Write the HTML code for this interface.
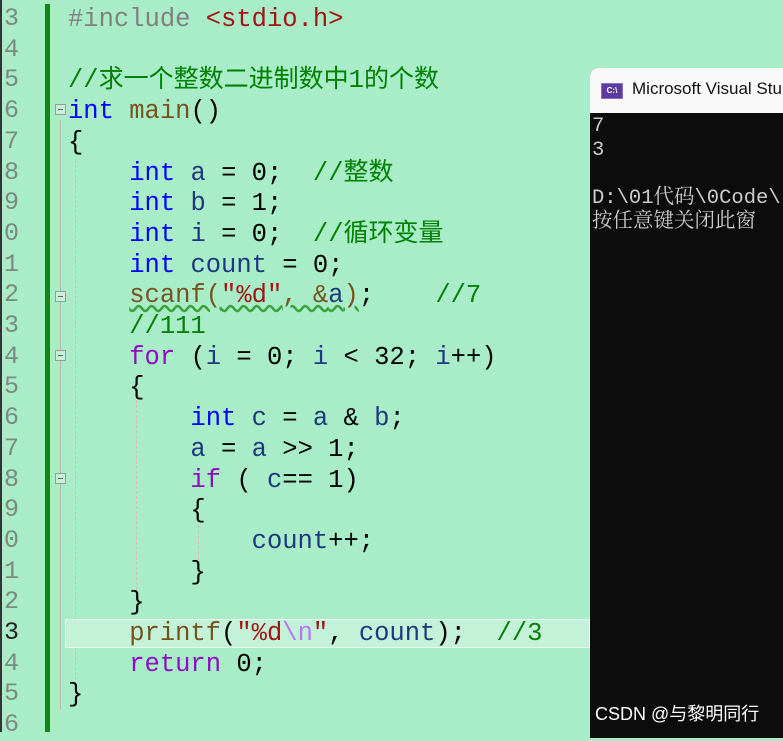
<!DOCTYPE html>
<html><head><meta charset="utf-8"><style>
body{margin:0;width:783px;height:732px;overflow:hidden;background:#a8edc8;position:relative;font-family:"Liberation Mono","Noto Sans CJK SC",monospace}
.ln{position:absolute;left:4px;font-size:25px;color:#7a8a80;line-height:30.7px}
.code{position:absolute;left:68px;font-size:25.5px;line-height:30.7px;white-space:pre;color:#000}
.k{color:#0000ff}.c{color:#008000}.p{color:#808080}.s{color:#a31515}.f{color:#74531f}.v{color:#1f377f}.r{color:#8f08c4}.e{color:#b776fb}
.cj{font-family:"Noto Sans CJK SC",sans-serif;font-size:25px;line-height:1px}
.fold{position:absolute;left:55px;width:9px;height:9px;border:1px solid #999;background:#c8f0da}
.fold:after{content:"";position:absolute;left:2px;top:4px;width:5px;height:1px;background:#666}
</style></head><body>
<div style="position:absolute;left:0;top:0;width:2px;height:732px;background:#333"></div>
<div style="position:absolute;left:45px;top:4px;width:5px;height:728px;background:#148414"></div>
<div style="position:absolute;left:60px;top:120px;width:1px;height:590px;background:#b0b8b0"></div>
<div style="position:absolute;left:75px;top:160px;width:0;height:540px;border-left:1px dashed #d9b8c0"></div>
<div style="position:absolute;left:136px;top:400px;width:0;height:190px;border-left:1px dashed #d9b8c0"></div>
<div style="position:absolute;left:198px;top:525px;width:0;height:40px;border-left:1px dashed #d9b8c0"></div>
<div class="fold" style="top:104px"></div>
<div class="fold" style="top:291px"></div>
<div class="fold" style="top:350px"></div>
<div class="fold" style="top:473px"></div>
<div style="position:absolute;left:65px;top:619px;width:525px;height:29px;background:#c3f2d8;border:1px solid #e8f8ee;box-sizing:border-box"></div>
<div class="ln" style="top:4px">3<br>4<br>5<br>6<br>7<br>8<br>9<br>0<br>1<br>2<br>3<br>4<br>5<br>6<br>7<br>8<br>9<br>0<br>1<br>2<br><span style="color:#222">3</span><br>4<br>5<br>6</div>
<div class="code" style="top:5px"><span class="p">#include</span> <span class="s">&lt;stdio.h&gt;</span>

<span class="c">//<span class="cj">求一个整数二进制数中</span>1<span class="cj">的个数</span></span>
<span class="k">int</span> <span class="f">main</span>()
{
    <span class="k">int</span> <span class="v">a</span> = 0;  <span class="c">//<span class="cj">整数</span></span>
    <span class="k">int</span> <span class="v">b</span> = 1;
    <span class="k">int</span> <span class="v">i</span> = 0;  <span class="c">//<span class="cj">循环变量</span></span>
    <span class="k">int</span> <span class="v">count</span> = 0;
    <span class="f" style="text-decoration:underline wavy #3ca03c">scanf(<span class="s">"%d"</span>, &amp;<span class="v">a</span>)</span>;    <span class="c">//7</span>
    <span class="c">//111</span>
    <span class="r">for</span> (<span class="v">i</span> = 0; <span class="v">i</span> &lt; 32; <span class="v">i</span>++)
    {
        <span class="k">int</span> <span class="v">c</span> = <span class="v">a</span> &amp; <span class="v">b</span>;
        <span class="v">a</span> = <span class="v">a</span> &gt;&gt; 1;
        <span class="r">if</span> ( <span class="v">c</span>== 1)
        {
            <span class="v">count</span>++;
        }
    }
    <span class="f">printf</span>(<span class="s">"%d<span class="e">\n</span>"</span>, <span class="v">count</span>);  <span class="c">//3</span>
    <span class="r">return</span> 0;
}</div>
<div style="position:absolute;left:590px;top:68px;width:200px;height:670px;background:#0c0c0c;border-radius:8px 0 0 0;overflow:hidden">
<div style="height:45px;background:#f9f9f9;position:relative">
<div style="position:absolute;left:11px;top:15px;width:22px;height:16px;background:#5b3c9e;border:1px solid #8a6cc8;box-sizing:border-box;color:#fff;font:bold 8px 'Liberation Sans';line-height:14px;text-align:center">C:\</div>
<div style="position:absolute;left:42px;top:11px;font:17px 'Liberation Sans',sans-serif;color:#111;white-space:nowrap">Microsoft Visual Stu</div>
</div>
<div style="color:#cccccc;font-family:'Liberation Mono','Noto Serif CJK SC',monospace;font-size:20.5px;line-height:24px;padding:2px 0 0 2px;white-space:pre">7
3

D:\01代码\0Code\
按任意键关闭此窗</div>
<div style="position:absolute;left:5px;top:632px;color:#fff;font:18px 'Liberation Sans','Noto Sans CJK SC',sans-serif;white-space:nowrap">CSDN @与黎明同行</div>
</div>
</body></html>
